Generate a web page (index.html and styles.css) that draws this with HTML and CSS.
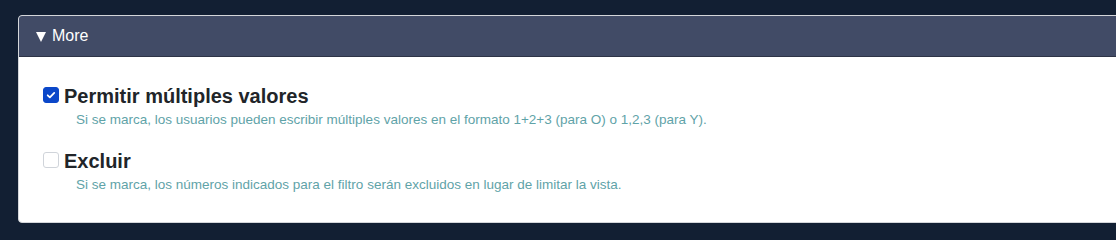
FILE: index.html
```html
<!DOCTYPE html>
<html lang="es">
<head>
<meta charset="utf-8">
<link rel="stylesheet" href="styles.css">
</head>
<body>
<div class="page">
  <section class="panel">
    <div class="panel-header"><span class="caret"></span>More</div>
    <div class="panel-body">
      <div class="option">
        <div class="option-head">
          <span class="box checked">
            <svg viewBox="0 0 16 16" width="16" height="16"><path d="M4.2 8.3l2.5 2.4 5-5.2" fill="none" stroke="#fff" stroke-width="2" stroke-linecap="round" stroke-linejoin="round"/></svg>
          </span>
          <span class="title">Permitir múltiples valores</span>
        </div>
        <div class="desc">Si se marca, los usuarios pueden escribir múltiples valores en el formato 1+2+3 (para O) o 1,2,3 (para Y).</div>
      </div>
      <div class="option">
        <div class="option-head">
          <span class="box"></span>
          <span class="title">Excluir</span>
        </div>
        <div class="desc">Si se marca, los números indicados para el filtro serán excluidos en lugar de limitar la vista.</div>
      </div>
    </div>
  </section>
</div>
</body>
</html>
```

FILE: styles.css
```css
html, body {
  margin: 0;
  padding: 0;
  background: #121f33;
  font-family: "Liberation Sans", Arial, sans-serif;
}
.page {
  padding: 15px 0 0 18px;
  width: 1116px;
  height: 238px;
  box-sizing: border-box;
  overflow: hidden;
}
.panel {
  width: 1110px;
  background: #fff;
  border: 1px solid #d4d6da;
  border-radius: 4px;
  overflow: hidden;
}
.panel-header {
  background: #414b66;
  color: #fff;
  font-size: 16px;
  height: 40px;
  padding-left: 17px;
  border-bottom: 1px solid #2e3447;
  display: flex;
  align-items: center;
}
.caret {
  width: 0;
  height: 0;
  border-left: 5.5px solid transparent;
  border-right: 5.5px solid transparent;
  border-top: 10px solid #fff;
  margin-right: 6px;
  margin-top: 1px;
}
.panel-body {
  padding: 28px 0 29px 24px;
  display: flex;
  flex-direction: column;
  gap: 22px;
}
.option-head {
  display: flex;
  align-items: flex-start;
  gap: 5px;
}
.box {
  width: 14px;
  height: 14px;
  border: 1px solid #d0d4da;
  border-radius: 3px;
  background: #fff;
  margin-top: 2px;
  display: flex;
  align-items: center;
  justify-content: center;
}
.box.checked {
  background: #0b47c9;
  border-color: #0b47c9;
}
.box svg {
  width: 14px;
  height: 14px;
}
.title {
  font-size: 20px;
  font-weight: bold;
  color: #212529;
  line-height: 22px;
}
.desc {
  font-size: 13.5px;
  color: #5fa3a8;
  padding-left: 33px;
  margin-top: 4px;
  line-height: 17px;
}
```
